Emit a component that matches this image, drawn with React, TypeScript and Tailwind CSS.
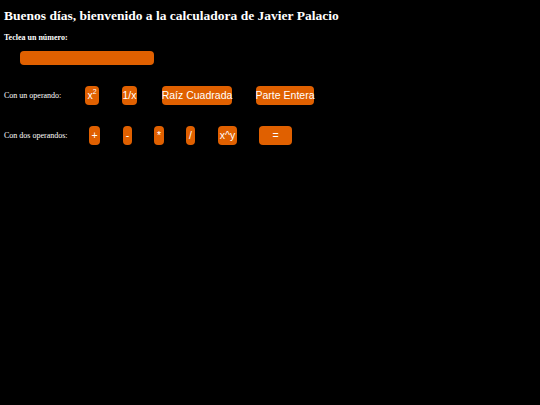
const serif = { fontFamily: '"Liberation Serif", "Times New Roman", serif' };

const btn =
  "flex h-[19px] items-center justify-center whitespace-nowrap rounded-[4px] bg-[#e06000] text-[10.5px] leading-none text-white font-['Liberation_Sans',Arial,sans-serif]";

const OneOperand = () => (
  <div className="mt-[21px] flex items-center">
    <span className="w-[81px] text-[8px] text-white">Con un operando:</span>
    <button className={`${btn} w-[14px]`}>
      x<span className="relative -top-[4px] text-[7px]">2</span>
    </button>
    <button className={`${btn} ml-[23px] w-[15px]`}>1/x</button>
    <button className={`${btn} ml-[25px] w-[70px]`}>Raíz Cuadrada</button>
    <button className={`${btn} ml-[24px] w-[58px]`}>Parte Entera</button>
  </div>
);

const TwoOperands = () => (
  <div className="mt-[21px] flex items-center">
    <span className="w-[85px] text-[8px] text-white">Con dos operandos:</span>
    <button className={`${btn} h-[18px] w-[11px]`}>+</button>
    <button className={`${btn} ml-[23px] h-[18px] w-[9px]`}>-</button>
    <button className={`${btn} ml-[22px] h-[18px] w-[10px]`}>*</button>
    <button className={`${btn} ml-[22px] h-[18px] w-[9px]`}>/</button>
    <button className={`${btn} ml-[23px] h-[18px] w-[19px]`}>x^y</button>
    <button className={`${btn} ml-[22px] h-[18px] w-[33px]`}>=</button>
  </div>
);

export default function App() {
  return (
    <div className="min-h-[405px] w-[540px] bg-black px-[4px] pt-[7px]" style={serif}>
      <h1 className="text-[13.5px] font-bold leading-[18px] text-white">
        Buenos días, bienvenido a la calculadora de Javier Palacio
      </h1>
      <p className="mt-[7px] text-[8px] font-bold leading-[12px] text-white">Teclea un número:</p>
      <div className="mt-[7px] pl-[16px]">
        <input
          type="text"
          className="block h-[14px] w-[134px] rounded-[4px] bg-[#e06000] outline-none"
        />
      </div>
      <OneOperand />
      <TwoOperands />
    </div>
  );
}
